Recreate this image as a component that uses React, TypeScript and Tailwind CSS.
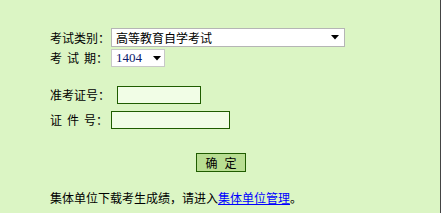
import React from "react";

const cjk = { fontFamily: '"Noto Sans CJK SC", "Liberation Sans", sans-serif' };

function Arrow() {
  return (
    <svg width="8" height="5" viewBox="0 0 8 5" className="block">
      <path d="M0 0 H8 L4 4.5 Z" fill="#000" />
    </svg>
  );
}

function Spaced({ chars, width }: { chars: string[]; width: string }) {
  return (
    <span className={`flex ${width}`}>
      {chars.map((c, i) => (
        <span key={i} className={i < chars.length - 1 ? "mr-[5px]" : ""}>
          {c}
        </span>
      ))}
      <span>：</span>
    </span>
  );
}

export default function App() {
  return (
    <div className="relative h-[213px] w-[441px] overflow-hidden border-r border-[#444444] bg-[#dbf5c4] text-[12px] leading-[16px] text-black" style={cjk}>
      <div className="pl-[50px] pt-[28px]">
        <div className="flex h-[19px] items-center">
          <span className="w-[61px]">考试类别：</span>
          <div className="flex h-[19px] w-[234px] items-center justify-between border border-[#b5b5b5] bg-white pl-[4px] pr-[5px]">
            <span>高等教育自学考试</span>
            <Arrow />
          </div>
        </div>
        <div className="mt-[2px] flex h-[18px] items-center">
          <Spaced chars={["考", "试", "期"]} width="w-[61px]" />
          <div className="flex h-[18px] w-[54px] items-center justify-between border border-[#c8c8c8] bg-white pl-[4px] pr-[3px]">
            <span className="text-[#0a1a6a]" style={{ fontFamily: '"Liberation Serif", serif', fontSize: 13 }}>1404</span>
            <Arrow />
          </div>
        </div>
        <div className="mt-[19px] flex h-[18px] items-center">
          <span className="w-[67px]">准考证号：</span>
          <div className="h-[18px] w-[84px] border border-[#1f5c00] bg-[#f1fde6]" />
        </div>
        <div className="mt-[7px] flex h-[18px] items-center">
          <Spaced chars={["证", "件", "号"]} width="w-[61px]" />
          <div className="h-[18px] w-[119px] border border-[#1f5c00] bg-[#f1fde6]" />
        </div>
        <div className="mt-[24px] flex pl-[146px]">
          <div className="flex h-[19px] w-[50px] items-center justify-center gap-[7px] border border-[#1f5c00] bg-[#b8de92]">
            <span>确</span>
            <span>定</span>
          </div>
        </div>
        <div className="mt-[18px] h-[16px]">
          集体单位下载考生成绩，请进入<span className="text-[#0000ff] underline">集体单位管理</span>。
        </div>
      </div>
    </div>
  );
}
